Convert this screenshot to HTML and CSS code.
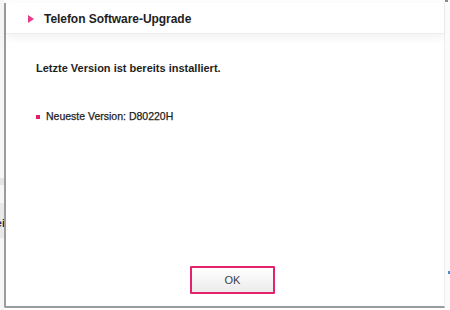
FILE: index.html
```html
<!DOCTYPE html>
<html lang="de">
<head>
    <meta charset="UTF-8">
    <title>Telefon Software-Upgrade</title>
    <link rel="stylesheet" href="styles.css">
</head>
<body>
<div class="behind-left">
    <div class="band band-top"></div>
    <div class="band band-text"><span>frei</span></div>
</div>

<div class="dialog">
    <div class="dialog-header">
        <span class="arrow"></span>
        <span class="dialog-title">Telefon Software-Upgrade</span>
    </div>
    <div class="dialog-body">
        <p class="status">Letzte Version ist bereits installiert.</p>
        <div class="version-row">
            <span class="bullet"></span>
            <span>Neueste Version: D80220H</span>
        </div>
    </div>
    <div class="dialog-footer">
        <button class="ok-btn">OK</button>
    </div>
</div>

<div class="behind-right">
    <span class="corner-mark"></span>
    <span class="blue-dot"></span>
</div>
</body>
</html>
```

FILE: styles.css
```css
body {
    margin: 0;
    height: 310px;
    display: flex;
    overflow: hidden;
    background: #fdfdfd;
    font-family: 'Liberation Sans', Arial, sans-serif;
    color: #222;
}

/* bits of the page behind the dialog */
.behind-left {
    width: 4px;
    flex: none;
    display: flex;
    flex-direction: column;
    background: #f6f6f6;
}

.band {
    display: flex;
    justify-content: flex-end;
    overflow: hidden;
    white-space: nowrap;
}

.band-top {
    margin-top: 178px;
    height: 7px;
    background: #e4e4e4;
}

.band-text {
    margin-top: 18px;
    height: 35px;
    align-items: center;
    background: #e9e9e9;
    font-size: 11px;
    font-weight: bold;
    color: #1d2a48;
}

.band-text span {
    padding-top: 4px;
    margin-right: -1px;
}

.dialog {
    width: 438px;
    height: 303px;
    margin-top: 3px;
    flex: none;
    display: flex;
    flex-direction: column;
    background: #fff;
    border-left: 2px solid #9c9c9c;
    border-bottom: 2px solid #9c9c9c;
    border-right: 1px solid #eeeeee;
    border-bottom-left-radius: 2px;
}

.dialog-header {
    height: 30px;
    display: flex;
    align-items: center;
    gap: 10px;
    padding-left: 22px;
    background: #fff;
    border-bottom: 1px solid #ededed;
    box-shadow: 0 4px 8px rgba(0, 0, 0, 0.05);
}

.arrow {
    width: 0;
    height: 0;
    border-top: 4px solid transparent;
    border-bottom: 4px solid transparent;
    border-left: 6px solid #e8398a;
    margin-top: 1px;
}

.dialog-title {
    font-size: 12px;
    font-weight: bold;
    letter-spacing: -0.05px;
    color: #1e1e1e;
    padding-top: 2px;
}

.dialog-body {
    padding: 27px 0 0 30px;
}

.status {
    margin: 0;
    font-size: 11px;
    line-height: 14px;
    font-weight: bold;
    color: #1e1e1e;
}

.version-row {
    margin-top: 34px;
    display: flex;
    align-items: center;
    gap: 6px;
    font-size: 10.5px;
    line-height: 14px;
    color: #1e1e1e;
    -webkit-text-stroke: 0.25px #1e1e1e;
}

.bullet {
    width: 4px;
    height: 4px;
    background: #e0206e;
    margin-top: 1px;
}

.dialog-footer {
    margin-top: auto;
    padding: 0 0 12px 184px;
}

.ok-btn {
    width: 85px;
    height: 28px;
    border: 2px solid #e4236d;
    border-radius: 1px;
    background: linear-gradient(#ffffff, #ebebeb);
    font-family: 'Liberation Sans', Arial, sans-serif;
    font-size: 11px;
    color: #3a3f4c;
    padding: 0;
}

.behind-right {
    flex: 1;
    position: relative;
    background: #fbfbfb;
}

.corner-mark {
    position: absolute;
    top: 0;
    left: 0;
    width: 3px;
    height: 2px;
    background: #8c8c8c;
}

.blue-dot {
    position: absolute;
    top: 271px;
    left: 3px;
    width: 2px;
    height: 3px;
    background: #4a8fd0;
}
```
